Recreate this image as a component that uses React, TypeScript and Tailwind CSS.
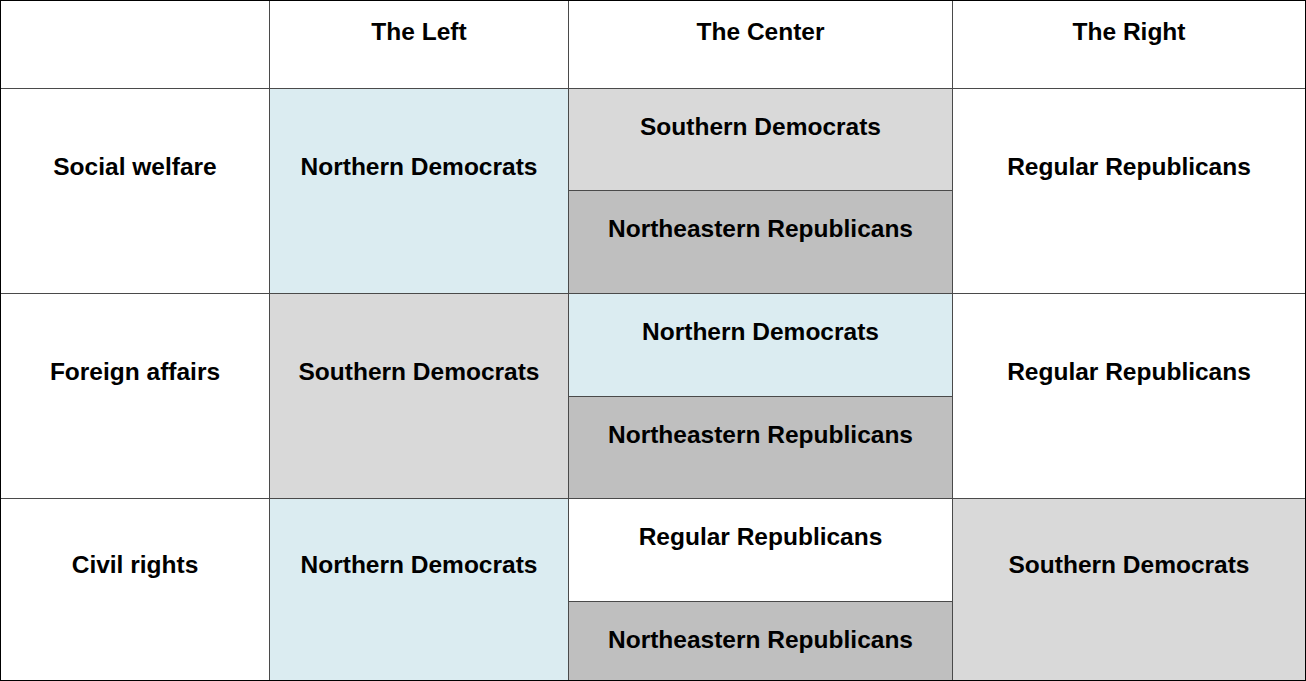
import React from "react";

const font = { fontFamily: '"Liberation Sans", Arial, sans-serif' };

function Side({ text, bg = "bg-white" }: { text: string; bg?: string }) {
  return (
    <div className={`${bg} flex items-center justify-center pb-[49px] text-center`}>
      <span>{text}</span>
    </div>
  );
}

function Sub({ text, bg, h }: { text: string; bg: string; h: string }) {
  return (
    <div className={`${bg} ${h} flex justify-center pt-[24px] text-center`}>
      <span>{text}</span>
    </div>
  );
}

function Center({ items }: { items: { text: string; bg: string; h: string }[] }) {
  return (
    <div className="flex flex-col gap-px bg-[#4a4a4a]">
      {items.map((it, i) => (
        <Sub key={i} {...it} />
      ))}
    </div>
  );
}

export default function App() {
  const blue = "bg-[#dbecf1]";
  const light = "bg-[#d9d9d9]";
  const dark = "bg-[#bfbfbf]";
  const white = "bg-white";
  return (
    <div
      style={font}
      className="w-[1306px] h-[681px] bg-white text-black text-[24.5px] leading-[28px] font-bold"
    >
      <div className="grid h-full grid-cols-[268px_298px_383px_352px] grid-rows-[87px_204px_204px_181px] gap-px border border-black bg-[#4a4a4a]">
        <div className="bg-white" />
        {["The Left", "The Center", "The Right"].map((t) => (
          <div key={t} className="bg-white flex justify-center pt-[17px]">
            <span>{t}</span>
          </div>
        ))}

        <Side text="Social welfare" />
        <Side text="Northern Democrats" bg={blue} />
        <Center
          items={[
            { text: "Southern Democrats", bg: light, h: "h-[101px]" },
            { text: "Northeastern Republicans", bg: dark, h: "flex-1" },
          ]}
        />
        <Side text="Regular Republicans" />

        <Side text="Foreign affairs" />
        <Side text="Southern Democrats" bg={light} />
        <Center
          items={[
            { text: "Northern Democrats", bg: blue, h: "h-[102px]" },
            { text: "Northeastern Republicans", bg: dark, h: "flex-1" },
          ]}
        />
        <Side text="Regular Republicans" />

        <Side text="Civil rights" />
        <Side text="Northern Democrats" bg={blue} />
        <Center
          items={[
            { text: "Regular Republicans", bg: white, h: "h-[102px]" },
            { text: "Northeastern Republicans", bg: dark, h: "flex-1" },
          ]}
        />
        <Side text="Southern Democrats" bg={light} />
      </div>
    </div>
  );
}
